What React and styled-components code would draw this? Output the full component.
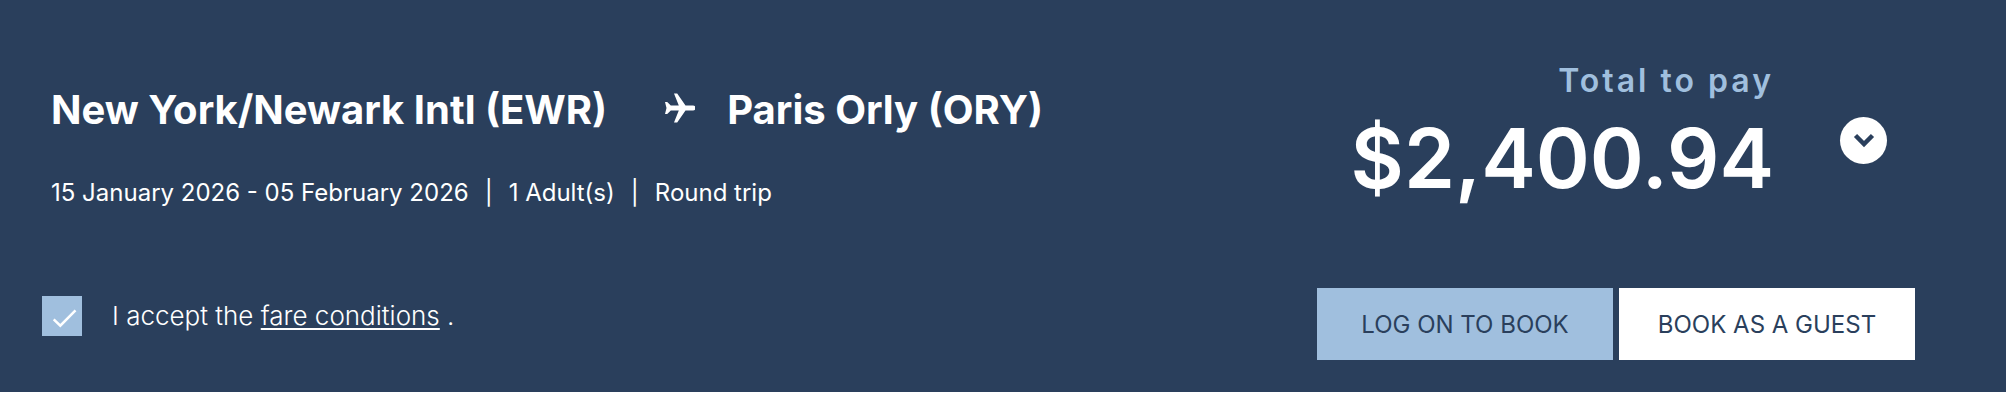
import { useState } from 'react';
import styled, { createGlobalStyle } from 'styled-components';

const colors = {
  navy: '#2a3f5c',
  sky: '#a0bfde',
  white: '#ffffff',
};

const smallScreenMedia = '1100px';

export default function App() {
  const [accepted, setAccepted] = useState(true);

  return (
    <>
      <GlobalStyle />
      <SummaryBar>
        <TopRow>
          <Trip>
            <Route>
              <span>New York/Newark Intl (EWR)</span>
              <PlaneIcon />
              <span>Paris Orly (ORY)</span>
            </Route>
            <TripDetails>
              <span>15 January 2026 - 05 February 2026</span>
              <span>|</span>
              <span>1 Adult(s)</span>
              <span>|</span>
              <span>Round trip</span>
            </TripDetails>
          </Trip>
          <TotalGroup>
            <Total>
              <TotalLabel>Total to pay</TotalLabel>
              <TotalPrice>$2,400.94</TotalPrice>
            </Total>
            <ToggleButton type="button" aria-label="Show price details">
              <ChevronIcon />
            </ToggleButton>
          </TotalGroup>
        </TopRow>
        <BottomRow>
          <Conditions>
            <CheckboxWrapper>
              <Checkbox
                type="checkbox"
                id="accept-conditions"
                checked={accepted}
                onChange={(e) => setAccepted(e.target.checked)}
              />
              {accepted && <CheckIcon />}
            </CheckboxWrapper>
            <ConditionsLabel htmlFor="accept-conditions">
              I accept the <ConditionsLink href="#fare-conditions">fare conditions</ConditionsLink> .
            </ConditionsLabel>
          </Conditions>
          <Buttons>
            <BookButton type="button" $background={colors.sky}>
              LOG ON TO BOOK
            </BookButton>
            <BookButton type="button" $background={colors.white}>
              BOOK AS A GUEST
            </BookButton>
          </Buttons>
        </BottomRow>
      </SummaryBar>
    </>
  );
}

function PlaneIcon() {
  return (
    <PlaneSvg viewBox="0 0 30 30" aria-hidden="true">
      <path d="M0 9h2.200l3.600 3.500h8L9 .5h3.200l8.300 12H28a2.500 2.500 0 0 1 0 5h-7.500L12.200 29.500H9l4.800-12h-8L2.200 21H0l1.500-6z" />
    </PlaneSvg>
  );
}

function ChevronIcon() {
  return (
    <svg width="22" height="15" viewBox="0 0 22 15" fill="none" aria-hidden="true">
      <path d="M2.500 2.500l8.500 8.500 8.500-8.500" stroke={colors.navy} strokeWidth="4.500" />
    </svg>
  );
}

function CheckIcon() {
  return (
    <CheckSvg viewBox="0 0 40 40" fill="none" aria-hidden="true">
      <path d="M11.700 23.300l6.600 6.400L33.500 14.300" stroke={colors.white} strokeWidth="2.500" />
    </CheckSvg>
  );
}

const GlobalStyle = createGlobalStyle`
  * {
    box-sizing: border-box;
  }

  body {
    margin: 0;
    background-color: ${colors.white};
    color: ${colors.white};
    font-family: Inter, 'Liberation Sans', sans-serif;
  }
`;

const SummaryBar = styled.section`
  background-color: ${colors.navy};
  display: flex;
  flex-direction: column;
  gap: 77px;
  padding: 56px 91px 32px 42px;
`;

const TopRow = styled.div`
  display: flex;
  justify-content: space-between;
  gap: 40px;

  @media (max-width: ${smallScreenMedia}) {
    flex-direction: column;
  }
`;

const Trip = styled.div`
  display: flex;
  flex-direction: column;
  gap: 40px;
  padding: 29px 0 0 9px;
`;

const Route = styled.h1`
  display: flex;
  align-items: center;
  flex-wrap: wrap;
  font-size: 40px;
  font-weight: 700;
  line-height: 50px;
  margin: 0;
`;

const PlaneSvg = styled.svg`
  width: 30px;
  height: 30px;
  margin: 0 32px 4px 58px;
  fill: ${colors.white};
`;

const TripDetails = styled.p`
  display: flex;
  flex-wrap: wrap;
  gap: 16px;
  font-size: 24px;
  line-height: 36px;
  margin: 0;
`;

const TotalGroup = styled.div`
  display: flex;
  align-items: flex-start;
  gap: 66px;
  padding-right: 28px;
`;

const Total = styled.div`
  display: flex;
  flex-direction: column;
  align-items: flex-end;
  gap: 8px;
  padding-top: 5px;
`;

const TotalLabel = styled.span`
  color: ${colors.sky};
  font-size: 32px;
  font-weight: 600;
  letter-spacing: 3px;
  line-height: 40px;
`;

const TotalPrice = styled.strong`
  font-size: 82px;
  font-weight: 600;
  line-height: 100px;
`;

const ToggleButton = styled.button`
  display: flex;
  align-items: center;
  justify-content: center;
  width: 47px;
  height: 47px;
  margin-top: 61px;
  padding: 0;
  border: none;
  border-radius: 50%;
  background-color: ${colors.white};
  cursor: pointer;
`;

const BottomRow = styled.div`
  display: flex;
  justify-content: space-between;
  gap: 40px;

  @media (max-width: ${smallScreenMedia}) {
    flex-direction: column;
  }
`;

const Conditions = styled.div`
  display: flex;
  align-items: center;
  gap: 30px;
  height: 56px;
`;

const CheckboxWrapper = styled.div`
  position: relative;
  width: 40px;
  height: 40px;
`;

const Checkbox = styled.input`
  appearance: none;
  display: block;
  width: 40px;
  height: 40px;
  margin: 0;
  background-color: ${colors.sky};
  cursor: pointer;
`;

const CheckSvg = styled.svg`
  position: absolute;
  inset: 0;
  pointer-events: none;
`;

const ConditionsLabel = styled.label`
  font-size: 26px;
  font-weight: 300;
  line-height: 36px;
`;

const ConditionsLink = styled.a`
  color: inherit;
  text-decoration-thickness: 2px;
  text-underline-offset: 3px;
`;

const Buttons = styled.div`
  display: flex;
  flex-wrap: wrap;
  gap: 6px;
`;

const BookButton = styled.button`
  width: 296px;
  height: 72px;
  padding: 0;
  border: none;
  background-color: ${({ $background }) => $background};
  color: ${colors.navy};
  font-family: inherit;
  font-size: 24px;
  cursor: pointer;
`;
